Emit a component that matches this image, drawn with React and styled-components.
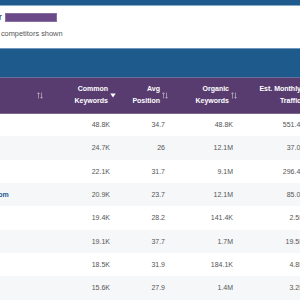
import React from "react";
import styled, { createGlobalStyle } from "styled-components";

const GlobalStyle = createGlobalStyle`
  html, body { margin: 0; padding: 0; background: #ffffff; }
  body { font-family: "Liberation Sans", Arial, sans-serif; overflow: hidden; }
  * { box-sizing: border-box; }
`;

const Page = styled.div`
  width: 300px;
  height: 300px;
  overflow: hidden;
  background: #ffffff;
`;

const TopBar = styled.div`
  height: 6px;
  background: #1e5a8c;
  border-bottom: 1px solid #8aaccc;
`;

const Intro = styled.div`
  height: 42px;
  padding-top: 7px;
`;

const Title = styled.div`
  display: flex;
  align-items: center;
  gap: 3px;
  margin-left: -59.5px;
  height: 9px;
  font-size: 9px;
  line-height: 9px;
  color: #333333;
`;

const Redacted = styled.span`
  display: inline-block;
  width: 52px;
  height: 9px;
  background: #6b4a89;
  border: 1px solid #8a6fa5;
`;

const Subtitle = styled.div`
  margin-top: 7px;
  margin-left: -9.4px;
  font-size: 7.4px;
  line-height: 10px;
  color: #555555;
`;

const Band = styled.div`
  height: 30px;
  background: #1e5a8c;
  border-top: 1px solid #6f96bd;
  border-bottom: 1px solid #6a6f9a;
`;

const TableWrap = styled.div`
  margin-left: -86px;
`;

const Table = styled.table`
  border-collapse: collapse;
  table-layout: fixed;
  width: 401px;
`;

const HeadRow = styled.tr`
  background: #583c70;
  height: 35px;
`;

const Th = styled.th`
  padding: 0 ${(p) => p.$pr ?? 5}px 0 10px;
  font-size: 7px;
  line-height: 12px;
  font-weight: 700;
  color: #ffffff;
  text-align: right;
  vertical-align: middle;
  border-bottom: 1px solid #7b6690;
`;

const HeadInner = styled.div`
  display: flex;
  align-items: center;
  justify-content: ${(p) => (p.$split ? "space-between" : "flex-end")};
  gap: 2px;
`;

const HeadText = styled.span`
  text-align: ${(p) => (p.$left ? "left" : "right")};
`;

const Row = styled.tr`
  height: 23.33px;
  background: ${(p) => (p.$alt ? "#f6f7f9" : "#ffffff")};
`;

const Td = styled.td`
  padding: 0 10px;
  font-size: 7px;
  color: #555555;
  text-align: right;
  white-space: nowrap;
  overflow: visible;
`;

const DomainTd = styled(Td)`
  text-align: left;
  color: #1e5a8c;
  font-weight: 700;
`;

const SortIcon = () => (
  <svg width="6" height="7" viewBox="0 0 6 7" fill="none" stroke="rgba(255,255,255,0.55)" strokeWidth="0.8">
    <path d="M1.5 6.5V0.8M0.3 2L1.5 0.7L2.7 2" />
    <path d="M4.5 0.5V6.2M3.3 5L4.5 6.3L5.7 5" />
  </svg>
);

const ActiveIcon = () => (
  <svg width="6" height="5" viewBox="0 0 6 5">
    <path d="M0.3 0.5H5.7L3 4.5Z" fill="#ffffff" />
  </svg>
);

const rows = [
  ["semrush.com", "48.8K", "34.7", "48.8K", "551.4K"],
  ["ahrefs.com", "24.7K", "26", "12.1M", "37.0K"],
  ["moz.com", "22.1K", "31.7", "9.1M", "296.4K"],
  ["searchenginejournal.com", "20.9K", "23.7", "12.1M", "85.0K"],
  ["backlinko.com", "19.4K", "28.2", "141.4K", "2.5M"],
  ["neilpatel.com", "19.1K", "37.7", "1.7M", "19.5M"],
  ["similarweb.com", "18.5K", "31.9", "184.1K", "4.8M"],
  ["hubspot.com", "15.6K", "27.9", "1.4M", "3.2M"],
];

export default function App() {
  return (
    <Page>
      <GlobalStyle />
      <TopBar />
      <Intro>
        <Title>
          <span>Competitors for</span>
          <Redacted />
        </Title>
        <Subtitle>10 competitors shown</Subtitle>
      </Intro>
      <Band />
      <TableWrap>
        <Table>
          <colgroup>
            <col style={{ width: 136 }} />
            <col style={{ width: 70 }} />
            <col style={{ width: 55 }} />
            <col style={{ width: 68 }} />
            <col style={{ width: 72 }} />
          </colgroup>
          <thead>
            <HeadRow>
              <Th $pr={7}>
                <HeadInner $split>
                  <HeadText $left>Domain</HeadText>
                  <SortIcon />
                </HeadInner>
              </Th>
              <Th $pr={4}>
                <HeadInner>
                  <HeadText>Common<br />Keywords</HeadText>
                  <ActiveIcon />
                </HeadInner>
              </Th>
              <Th $pr={7}>
                <HeadInner>
                  <HeadText>Avg<br />Position</HeadText>
                  <SortIcon />
                </HeadInner>
              </Th>
              <Th $pr={6}>
                <HeadInner>
                  <HeadText>Organic<br />Keywords</HeadText>
                  <SortIcon />
                </HeadInner>
              </Th>
              <Th $pr={6}>
                <HeadInner>
                  <HeadText>Est. Monthly<br />Traffic</HeadText>
                  <SortIcon />
                </HeadInner>
              </Th>
            </HeadRow>
          </thead>
          <tbody>
            {rows.map((r, i) => (
              <Row key={r[0]} $alt={i % 2 === 1}>
                <DomainTd>{r[0]}</DomainTd>
                <Td>{r[1]}</Td>
                <Td>{r[2]}</Td>
                <Td>{r[3]}</Td>
                <Td>{r[4]}</Td>
              </Row>
            ))}
          </tbody>
        </Table>
      </TableWrap>
    </Page>
  );
}
